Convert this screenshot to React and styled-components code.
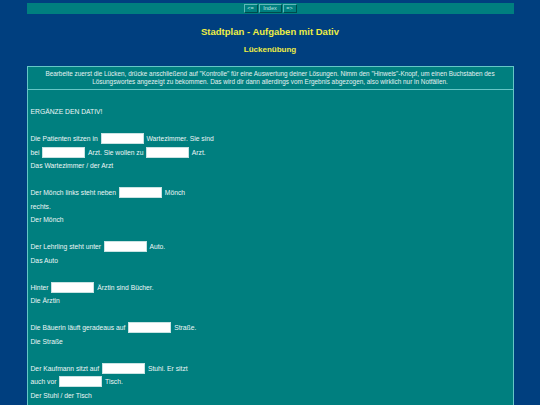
import React from "react";
import styled, { createGlobalStyle } from "styled-components";

const GlobalStyle = createGlobalStyle`
  html, body {
    margin: 0;
    padding: 0;
    background: #003f7f;
    font-family: "Liberation Sans", Arial, sans-serif;
  }
`;

const Page = styled.div`
  width: 487px;
  margin: 0 auto;
  padding-top: 3px;
`;

const NavBar = styled.div`
  height: 11px;
  background: #007f7f;
  display: flex;
  justify-content: center;
  align-items: center;
  gap: 1px;
`;

const NavButton = styled.span`
  box-sizing: border-box;
  height: 9px;
  min-width: ${(p) => (p.wide ? "23px" : "14px")};
  padding: 0 2px;
  border: 1px solid;
  border-color: #5fb8b8 #004c4c #004c4c #5fb8b8;
  color: #bfe3e3;
  font-size: 5.5px;
  line-height: 7px;
  text-align: center;
  cursor: pointer;
`;

const Title = styled.h1`
  margin: 12px 0 0;
  color: #eeee44;
  font-size: 9.5px;
  line-height: 11px;
  font-weight: bold;
  text-align: center;
`;

const SubTitle = styled.h2`
  margin: 8px 0 0;
  color: #eeee44;
  font-size: 8px;
  line-height: 10px;
  font-weight: bold;
  text-align: center;
`;

const Box = styled.div`
  margin-top: 11px;
  border: 1px solid #66c6c6;
  background: #007f7f;
`;

const Instructions = styled.div`
  padding: 3px 4px 3px;
  border-bottom: 1px solid #66c6c6;
  color: #e6f2f2;
  font-size: 6.4px;
  line-height: 8px;
  text-align: center;
`;

const Exercise = styled.div`
  padding: 15px 3px 12px;
  color: #eef6f6;
  font-size: 6.75px;
`;

const Line = styled.div`
  height: 13.5px;
  display: flex;
  align-items: center;
  white-space: pre;
`;

const Gap = styled.input`
  box-sizing: border-box;
  width: 43px;
  height: 11px;
  margin: 0 1px;
  padding: 0;
  border: 1px solid #c9e3e3;
  background: #ffffff;
  outline: none;
`;

const items = [
  [
    ["Die Patienten sitzen in ", null, " Wartezimmer. Sie sind"],
    ["bei ", null, " Arzt. Sie wollen zu ", null, " Arzt."],
    ["Das Wartezimmer / der Arzt"],
  ],
  [
    ["Der Mönch links steht neben ", null, " Mönch"],
    ["rechts."],
    ["Der Mönch"],
  ],
  [
    ["Der Lehrling steht unter ", null, " Auto."],
    ["Das Auto"],
  ],
  [
    ["Hinter ", null, " Ärztin sind Bücher."],
    ["Die Ärztin"],
  ],
  [
    ["Die Bäuerin läuft geradeaus auf ", null, " Straße."],
    ["Die Straße"],
  ],
  [
    ["Der Kaufmann sitzt auf ", null, " Stuhl. Er sitzt"],
    ["auch vor ", null, " Tisch."],
    ["Der Stuhl / der Tisch"],
  ],
];

export default function App() {
  return (
    <>
      <GlobalStyle />
      <Page>
        <NavBar>
          <NavButton>&lt;=</NavButton>
          <NavButton wide>Index</NavButton>
          <NavButton>=&gt;</NavButton>
        </NavBar>
        <Title>Stadtplan - Aufgaben mit Dativ</Title>
        <SubTitle>Lückenübung</SubTitle>
        <Box>
          <Instructions>
            Bearbeite zuerst die Lücken, drücke anschließend auf "Kontrolle" für eine Auswertung deiner Lösungen. Nimm den "Hinweis"-Knopf, um einen Buchstaben des Lösungswortes angezeigt zu bekommen. Das wird dir dann allerdings vom Ergebnis abgezogen, also wirklich nur in Notfällen.
          </Instructions>
          <Exercise>
            <Line>ERGÄNZE DEN DATIV!</Line>
            <Line />
            {items.map((block, b) => (
              <React.Fragment key={b}>
                {block.map((parts, l) => (
                  <Line key={l}>
                    {parts.map((p, i) =>
                      p === null ? <Gap key={i} type="text" /> : <span key={i}>{p}</span>
                    )}
                  </Line>
                ))}
                <Line />
              </React.Fragment>
            ))}
          </Exercise>
        </Box>
      </Page>
    </>
  );
}
